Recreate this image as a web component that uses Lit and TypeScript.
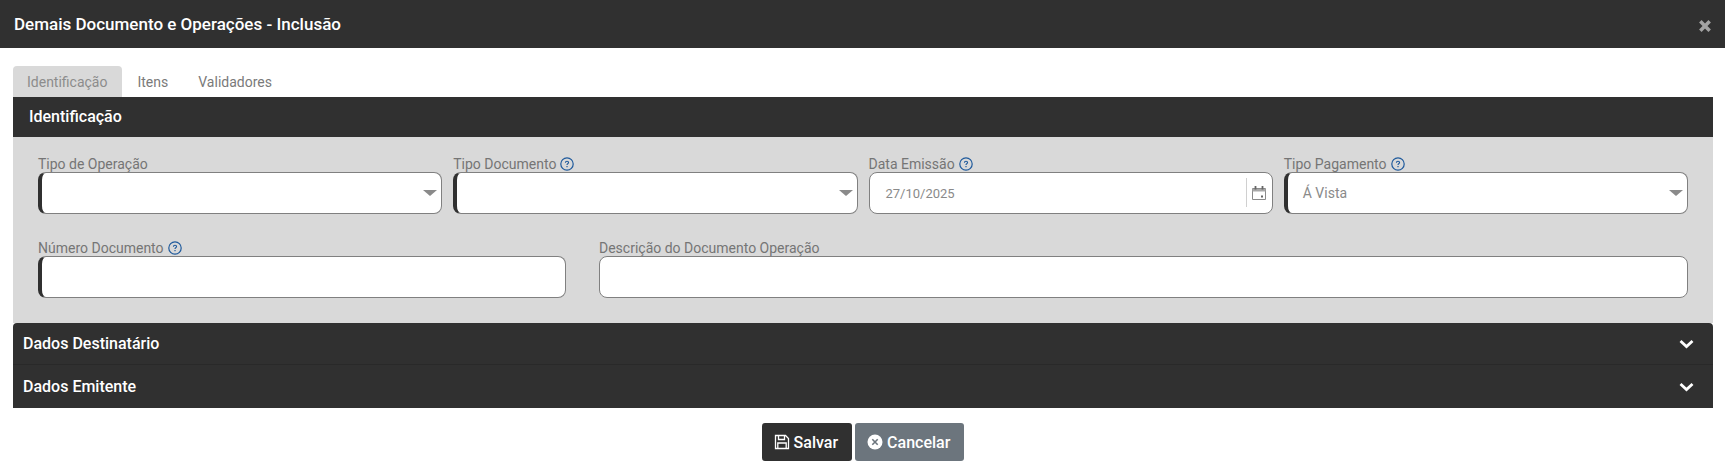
import { LitElement, css, html, nothing } from "lit";
import { customElement } from "lit/decorators.js";

const help = html`<svg class="help" viewBox="0 0 14 14" aria-hidden="true">
  <circle cx="7" cy="7" r="6.2" fill="none" stroke="#1f5a9c" stroke-width="1.2"></circle>
  <path d="M5.4 5.7c0-.9.7-1.4 1.6-1.4s1.6.5 1.6 1.3c0 1.2-1.6 1.2-1.6 2.3" fill="none" stroke="#1f5a9c" stroke-width="1.1"></path>
  <rect x="6.4" y="9" width="1.2" height="1.2" fill="#1f5a9c"></rect>
</svg>`;

const chevron = html`<svg class="chevron" viewBox="0 0 16 10" aria-hidden="true">
  <path d="M1.5 2l6 5.5 6-5.5" fill="none" stroke="#fff" stroke-width="2.8"></path>
</svg>`;

const calendar = html`<svg class="calendar" viewBox="0 0 14 14" aria-hidden="true">
  <path d="M.5 2.500h13v11H.5z" fill="none" stroke="#8a8a8a"></path>
  <path d="M.5 3h13v2.500H.5z" fill="#a8a8a8"></path>
  <path d="M3.500 0v3.500M10.500 0v3.500" stroke="#666" stroke-width="1.800"></path>
  <rect x="9" y="9.500" width="2" height="2" fill="#666"></rect>
</svg>`;

@customElement("app-root")
export class AppRoot extends LitElement {
  field(label: string, opts: { hint?: boolean; required?: boolean; select?: boolean; date?: boolean; value?: string } = {}) {
    return html`
      <div class="field">
        <label>${label}${opts.hint ? help : nothing}</label>
        <div class="input ${opts.required ? "required" : ""}">
          <span class="value ${opts.date ? "date" : ""}">${opts.value ?? ""}</span>
          ${opts.select ? html`<span class="caret"></span>` : nothing}
          ${opts.date ? html`<span class="addon">${calendar}</span>` : nothing}
        </div>
      </div>
    `;
  }

  render() {
    return html`
      <header class="title">
        <span>Demais Documento e Operações - Inclusão</span>
        <svg class="close" viewBox="0 0 12 12" aria-hidden="true">
          <path d="M2 2l8 8M10 2l-8 8" stroke="#a3a3a3" stroke-width="3"></path>
        </svg>
      </header>

      <main>
        <nav class="tabs">
          <a class="active">Identificação</a>
          <a>Itens</a>
          <a>Validadores</a>
        </nav>

        <div class="panel-head">Identificação</div>
        <section class="panel-body">
          <div class="row four">
            ${this.field("Tipo de Operação", { required: true, select: true })}
            ${this.field("Tipo Documento", { hint: true, required: true, select: true })}
            ${this.field("Data Emissão", { hint: true, date: true, value: "27/10/2025" })}
            ${this.field("Tipo Pagamento", { hint: true, required: true, select: true, value: "Á Vista" })}
          </div>
          <div class="row two">
            ${this.field("Número Documento", { hint: true, required: true })}
            ${this.field("Descrição do Documento Operação")}
          </div>
        </section>

        <div class="accordion first"><span>Dados Destinatário</span>${chevron}</div>
        <div class="accordion"><span>Dados Emitente</span>${chevron}</div>

        <footer class="actions">
          <button class="save">
            <svg viewBox="0 0 16 16" aria-hidden="true">
              <path d="M1.500 1.500h10l3 3v10h-13z" fill="none" stroke="#fff" stroke-width="1.300"></path>
              <path d="M4.500 1.500v4h6v-4M3.800 14.500v-5.500h8.400v5.500" fill="none" stroke="#fff" stroke-width="1.300"></path>
            </svg>
            Salvar
          </button>
          <button class="cancel">
            <svg viewBox="0 0 16 16" aria-hidden="true">
              <circle cx="8" cy="8" r="7.500" fill="#fff"></circle>
              <path d="M5.300 5.300l5.400 5.400M10.700 5.300l-5.400 5.400" stroke="#6c757d" stroke-width="1.600"></path>
            </svg>
            Cancelar
          </button>
        </footer>
      </main>
    `;
  }

  static styles = css`
    :host {
      display: block;
      font-family: Roboto, "Liberation Sans", sans-serif;
      background: #fff;
      height: 471px;
      overflow: hidden;
    }

    .title {
      height: 48px;
      display: flex;
      align-items: center;
      justify-content: space-between;
      padding: 0 13px 0 14px;
      background: #303030;
      color: #fff;
      font-size: 17px;
      font-weight: 500;
    }
    .close {
      width: 14px;
      height: 14px;
      margin-top: 4px;
    }

    main {
      padding: 18px 12px 0 13px;
    }

    .tabs {
      display: flex;
      height: 31px;
      font-size: 14px;
      color: #7a7a7a;
    }
    .tabs a {
      display: flex;
      align-items: center;
      padding: 0 15px;
    }
    .tabs a.active {
      padding-left: 14px;
      background: #d9d9d9;
      color: #8c8c8c;
      border-radius: 4px 4px 0 0;
    }

    .panel-head {
      height: 40px;
      box-sizing: border-box;
      display: flex;
      align-items: center;
      padding: 0 0 2px 16px;
      background: #303030;
      color: #fff;
      font-size: 16px;
      font-weight: 500;
    }

    .panel-body {
      height: 186px;
      box-sizing: border-box;
      padding: 19px 25px 0;
      background: #d9d9d9;
      display: flex;
      flex-direction: column;
      gap: 26px;
    }
    .row {
      display: grid;
    }
    .row.four {
      grid-template-columns: repeat(4, 1fr);
      column-gap: 11px;
    }
    .row.two {
      grid-template-columns: 528px 1fr;
      column-gap: 33px;
    }

    label {
      display: flex;
      align-items: center;
      gap: 4px;
      height: 16px;
      font-size: 14px;
      color: #757575;
      white-space: nowrap;
    }
    .help {
      width: 14px;
      height: 14px;
    }

    .input {
      height: 42px;
      box-sizing: border-box;
      display: flex;
      align-items: center;
      background: #fff;
      border: 1px solid #808080;
      border-radius: 8px;
      padding-left: 16px;
      color: #8a8a8a;
      font-size: 14px;
    }
    .input.required {
      border-left: 4px solid #303030;
      padding-left: 15px;
    }
    .value {
      flex: 1;
    }
    .value.date {
      font-size: 13px;
    }
    .caret {
      width: 0;
      height: 0;
      margin-right: 4px;
      border-left: 7px solid transparent;
      border-right: 7px solid transparent;
      border-top: 6px solid #8a8a8a;
    }
    .addon {
      align-self: stretch;
      display: flex;
      align-items: center;
      justify-content: center;
      width: 25px;
      margin: 5px 0 6px;
      border-left: 1px solid #d0d0d0;
    }
    .calendar {
      width: 14px;
      height: 14px;
    }

    .accordion {
      height: 43px;
      box-sizing: border-box;
      display: flex;
      align-items: center;
      justify-content: space-between;
      padding: 0 18px 0 10px;
      background: #303030;
      color: #fff;
      font-size: 16px;
      font-weight: 500;
    }
    .accordion.first {
      height: 42px;
      border-bottom: 1px solid #292929;
      border-radius: 4px 4px 0 0;
    }
    .chevron {
      width: 16px;
      height: 10px;
    }

    .actions {
      display: flex;
      justify-content: center;
      gap: 3px;
      margin-top: 15px;
    }
    button {
      height: 38px;
      display: flex;
      align-items: center;
      gap: 4px;
      padding: 0 14px 0 12px;
      border: 0;
      border-radius: 3px;
      color: #fff;
      font: 500 16px Roboto, "Liberation Sans", sans-serif;
    }
    button svg {
      width: 16px;
      height: 16px;
    }
    .save {
      background: #303030;
    }
    .cancel {
      background: #6c757d;
    }
  `;
}

declare global {
  interface HTMLElementTagNameMap {
    "app-root": AppRoot;
  }
}
